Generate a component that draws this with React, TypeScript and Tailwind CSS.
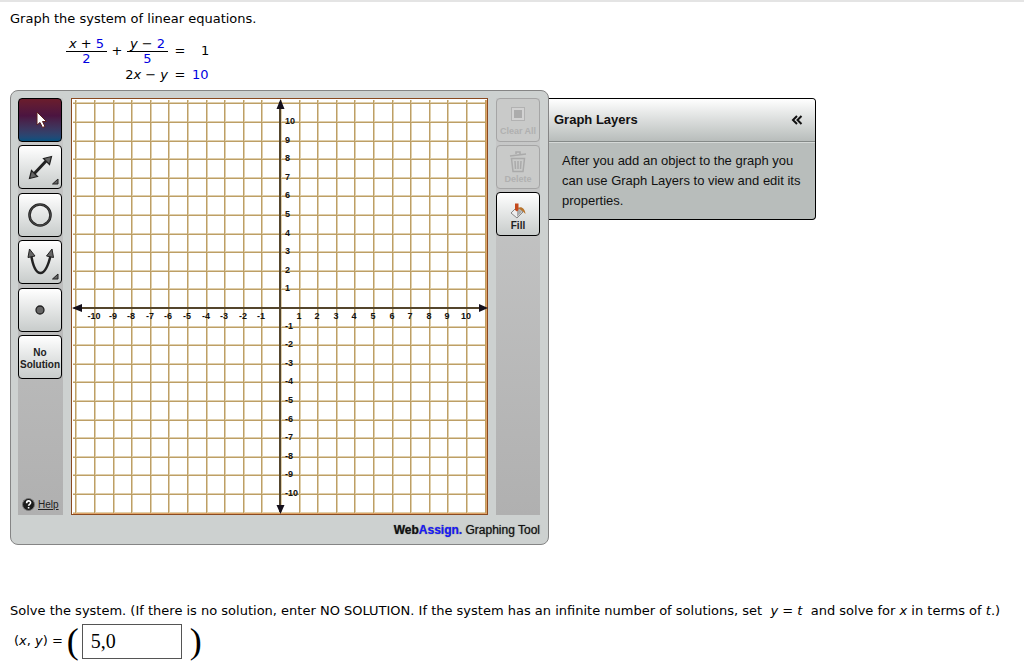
import { useState, type ReactNode } from "react";
import clsx from "clsx";

type Tool = {
  id: string;
  label: string;
  icon: ReactNode;
};

const UNIT = 18.6;
const CENTER = 210;
const SIZE = 417;

const lines = Array.from({ length: 23 }, (_, i) => i - 11);
const ticks = lines.filter((n) => n !== 0 && Math.abs(n) !== 11);
const toPixel = (n: number) => Math.round(CENTER + n * UNIT);

const CornerMark = () => (
  <path d="M40 34v5h-5.500z" fill="#666" stroke="#222" strokeWidth="1" />
);

const tools: Tool[] = [
  {
    id: "select",
    label: "Select",
    icon: (
      <path
        d="M19 14v13l3-2.500 2.500 5 2.500-1-2.500-5h4z"
        fill="#fff"
        stroke="#5a2020"
        strokeWidth="1"
      />
    ),
  },
  {
    id: "line",
    label: "Line",
    icon: (
      <>
        <path d="M15 30L29 15" stroke="#222" strokeWidth="3" />
        <path
          d="M11.500 33.500l2-8 6 6zM33.500 11.500l-8 2 6 6z"
          fill="#666"
          stroke="#222"
          strokeWidth="1.200"
        />
        <CornerMark />
      </>
    ),
  },
  {
    id: "circle",
    label: "Circle",
    icon: (
      <>
        <circle cx="22" cy="22" r="10.500" fill="none" stroke="#222" strokeWidth="2.600" />
        <circle cx="22" cy="22" r="10.500" fill="none" stroke="#666" strokeWidth="0.600" />
      </>
    ),
  },
  {
    id: "parabola",
    label: "Parabola",
    icon: (
      <>
        <path
          d="M13 14C15 27 18 33 22.500 33S30 27 33 14"
          fill="none"
          stroke="#222"
          strokeWidth="2.500"
        />
        <path
          d="M11.500 9l5.500 7-7 1.500zM34 9l1.500 8.500-7-1.500z"
          fill="#666"
          stroke="#222"
          strokeWidth="1"
        />
        <CornerMark />
      </>
    ),
  },
  {
    id: "point",
    label: "Point",
    icon: <circle cx="22" cy="22" r="4" fill="#666" stroke="#222" strokeWidth="1.300" />,
  },
];

const buttonStyle =
  "h-11 w-11 rounded-sm border border-black bg-linear-to-b from-white to-[#c8cccb] text-[10px] leading-3 font-bold text-[#222]";
const disabledStyle =
  "flex h-11 w-11 flex-col items-center justify-end rounded-sm border border-[#a5a5a5] bg-[#c9cac9] pb-1 text-[9px] leading-3 font-bold whitespace-nowrap text-[#b0b0b0]";

const Fraction = ({ top, bottom }: { top: ReactNode; bottom: ReactNode }) => (
  <span className="inline-flex w-[41px] flex-col items-center leading-[14px]">
    <span className="w-full border-b border-black text-center whitespace-nowrap">{top}</span>
    <span className="text-[#0000e0]">{bottom}</span>
  </span>
);

const Equations = () => (
  <div className="grid w-fit grid-cols-[102px_24px_30px] items-center pl-14">
    <div className="flex h-7 items-center justify-between">
      <Fraction top={<><i>x</i> + <span className="text-[#0000e0]">5</span></>} bottom="2" />
      <span>+</span>
      <Fraction top={<><i>y</i> − <span className="text-[#0000e0]">2</span></>} bottom="5" />
    </div>
    <span className="text-center">=</span>
    <span className="pl-[9px]">1</span>
    <span className="h-5 text-right leading-5">
      2<i>x</i> − <i>y</i>
    </span>
    <span className="text-center">=</span>
    <span className="text-[#0000e0]">10</span>
  </div>
);

const Graph = () => (
  <svg
    width={SIZE}
    height={SIZE}
    className="block shrink-0 bg-white"
    viewBox={`0 0 ${SIZE} ${SIZE}`}
  >
    <g shapeRendering="crispEdges">
      {lines.map((n) => (
        <g key={n}>
          <rect x={toPixel(n) - 1} y="2" width="2" height="414" fill="#dfcfac" />
          <rect x="2" y={toPixel(n) - 1} width="414" height="2" fill="#dfcfac" />
        </g>
      ))}
      {lines.map((n) => (
        <g key={n}>
          <rect x={toPixel(n) - 1} y="2" width="1" height="414" fill="#bd9f66" />
          <rect x="2" y={toPixel(n)} width="414" height="1" fill="#bd9f66" />
        </g>
      ))}
      <rect x="208" y="4" width="2" height="410" fill="#54452c" />
      <rect x="4" y="209" width="410" height="2" fill="#54452c" />
      <rect x="0.500" y="0.500" width="416" height="416" fill="none" stroke="#8a4a20" />
      <path d="M415.500 2V415.500H2" fill="none" stroke="#e0a468" />
    </g>
    <path
      d="M209.500 1l4 10h-8zM209.500 416l4-9h-8zM1 210l10-4v8zM417 210l-9-4v8z"
      fill="#15101c"
    />
    <g className="font-['Liberation_Sans'] text-[9px] font-bold" fill="#111">
      {ticks.map((n) => (
        <text key={`x${n}`} x={toPixel(n) - 1} y="221" textAnchor="middle">
          {n}
        </text>
      ))}
      {ticks.map((n) => (
        <text key={`y${n}`} x="214" y={toPixel(-n) + 2}>
          {n}
        </text>
      ))}
    </g>
  </svg>
);

const GraphingTool = () => {
  const [selected, setSelected] = useState("select");

  return (
    <div className="w-fit rounded-lg border border-[#858585] bg-[#cdd1d0] pt-[7px] pr-2 pl-[7px] font-['Liberation_Sans',sans-serif]">
      <div className="flex gap-2">
        <div className="flex w-[45px] flex-col justify-between bg-linear-to-b from-[#c9caca] to-[#b0b0b0]">
          <div className="flex h-[281px] flex-col justify-between">
            {tools.map((tool) => (
              <button
                key={tool.id}
                type="button"
                aria-label={tool.label}
                onClick={() => setSelected(tool.id)}
                className={clsx(
                  "h-11 w-11 rounded-sm border border-black bg-linear-to-b",
                  selected === tool.id
                    ? "from-[#6b1d2c] via-[#4b1440] via-40% to-[#00517f]"
                    : "from-white to-[#c8cccb]"
                )}
              >
                <svg viewBox="1 1 42 42" className="block h-full w-full">
                  {tool.icon}
                </svg>
              </button>
            ))}
            <button type="button" className={clsx(buttonStyle, "pt-1")}>
              No
              <br />
              Solution
            </button>
          </div>
          <a href="#help" className="flex items-center gap-[3px] pb-1 pl-1 text-[10px] leading-3 text-[#222]">
            <svg width="13" height="13" viewBox="0 0 13 13">
              <circle cx="6.500" cy="6.500" r="6" fill="#1b1b1b" stroke="#777" />
              <path
                d="M4.600 5.200c0-3 4-3 4-.4 0 1.500-2 1.500-2 3M6.600 9v1.500"
                fill="none"
                stroke="#fff"
                strokeWidth="1.600"
              />
            </svg>
            <span className="underline">Help</span>
          </a>
        </div>
        <Graph />
        <div className="flex w-11 flex-col gap-[3px] bg-linear-to-b from-[#c9caca] to-[#b0b0b0]">
          <button type="button" disabled className={disabledStyle}>
            <svg width="16" height="16" viewBox="0 0 16 16" className="mb-[3px]">
              <rect x="1.500" y="1.500" width="13" height="13" fill="#d2d2d2" stroke="#b2b2b2" />
              <rect x="4" y="4" width="8" height="8" fill="#acacac" />
            </svg>
            Clear All
          </button>
          <button type="button" disabled className={clsx(disabledStyle, "pb-[3px]")}>
            <svg width="18" height="22" viewBox="0 0 18 22" fill="none" stroke="#aaa" strokeWidth="1.500">
              <path d="M1 5l16-2M7 3V1h4v2M2.500 7.500h13l-1.500 13H4zM6 10l.5 8M9 10v8M12 10l-.5 8" />
            </svg>
            Delete
          </button>
          <button
            type="button"
            className={clsx(buttonStyle, "flex flex-col items-center justify-end pb-[3px]")}
          >
            <svg width="18" height="18" viewBox="0 0 18 18">
              <path d="M2 11l6-6 6 5-6 6z" fill="#eee" stroke="#888" />
              <path d="M8 6l5 4-5 5z" fill="#aaa" />
              <path d="M9 6c3-2 7 0 7.500 6l-3-3z" fill="#b8742c" />
              <path d="M6 1.500h3.500V8L8 9.500 6 8z" fill="#c4491c" />
            </svg>
            Fill
          </button>
        </div>
      </div>
      <div className="flex h-[29px] items-center justify-end text-xs text-[#111] text-shadow-[0_0_1px_#555]">
        <span className="font-bold">
          Web<span className="text-[#1a1aff]">Assign.</span>
        </span>
        &nbsp;Graphing Tool
      </div>
    </div>
  );
};

const GraphLayers = () => {
  const [open, setOpen] = useState(true);

  return (
    <aside className="mt-2 w-[267px] overflow-hidden rounded-r border border-l-0 border-black bg-[#b8bdbb] font-['Liberation_Sans',sans-serif] text-[13px] text-[#111]">
      <header className="flex h-[43px] items-center justify-between border-b border-[#858a88] bg-linear-to-b from-white to-[#b8bdbb] pr-3 pl-[5px]">
        <h2 className="font-bold">Graph Layers</h2>
        <button type="button" aria-label="Toggle layers" onClick={() => setOpen(!open)}>
          <svg width="12" height="10" viewBox="0 0 12 10" fill="none" stroke="#111" strokeWidth="2">
            <path d="M6 1L2 5l4 4M10.500 1l-4 4 4 4" />
          </svg>
        </button>
      </header>
      {open && (
        <p className="border-t border-[#d5d9d7] pt-2 pr-2 pb-2 pl-[13px] leading-5">
          After you add an object to the graph you can use Graph Layers to view and edit its
          properties.
        </p>
      )}
    </aside>
  );
};

const App = () => {
  const [answer, setAnswer] = useState("5,0");

  return (
    <main className="border-t-2 border-[#e4e4e4] bg-white font-['DejaVu_Sans',sans-serif] text-[13px] text-black">
      <div className="pt-[7px] pl-[10px]">
        <p className="leading-5">Graph the system of linear equations.</p>
        <div className="pt-2 pb-[5px]">
          <Equations />
        </div>
        <div className="flex items-start">
          <GraphingTool />
          <GraphLayers />
        </div>
        <div className="pt-14">
          <p className="leading-5 whitespace-nowrap">
            Solve the system. (If there is no solution, enter NO SOLUTION. If the system has an
            infinite number of solutions, set &nbsp;<i>y</i> = <i>t</i>&nbsp; and solve for{" "}
            <i>x</i> in terms of <i>t</i>.)
          </p>
          <div className="flex h-10 items-center pl-1">
            <label htmlFor="answer">
              (<i>x</i>, <i>y</i>) =
            </label>
            <span className="pl-1 font-['Liberation_Serif',serif] text-4xl leading-9">(</span>
            <input
              id="answer"
              type="text"
              value={answer}
              onChange={(e) => setAnswer(e.target.value)}
              className="ml-[3px] h-[35px] w-[100px] border border-[#555] px-2 font-['Liberation_Serif',serif] text-xl"
            />
            <span className="pl-2 font-['Liberation_Serif',serif] text-4xl leading-9">)</span>
          </div>
        </div>
      </div>
    </main>
  );
};

export default App;
